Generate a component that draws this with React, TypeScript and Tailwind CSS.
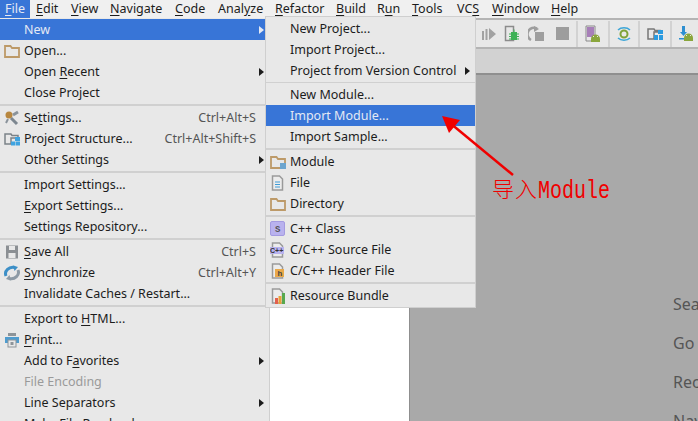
import { ReactNode } from "react";

const sans = "[font-family:'Noto_Sans','Liberation_Sans',sans-serif]";

function U({ children }: { children: ReactNode }) {
  return <span className="underline underline-offset-2">{children}</span>;
}

function Folder({ extra }: { extra?: boolean }) {
  return (
    <svg width="16" height="16" viewBox="0 0 16 16">
      <path d="M1 3h5.500l1.500 2h7v9H1z" fill="#e8e8e8" stroke="#bd9a68" strokeWidth="1.800" />
      {extra && <rect x="10" y="9" width="6" height="6" fill="#6ea6cf" />}
    </svg>
  );
}

function Doc({ children }: { children?: ReactNode }) {
  return (
    <svg width="16" height="16" viewBox="0 0 16 16">
      <path d="M2.500 1h7l3 3v11h-10z" fill="#ececec" stroke="#9a9a9a" strokeWidth="1.500" />
      {children}
    </svg>
  );
}

function Android({ x, y }: { x: number; y: number }) {
  return (
    <g transform={`translate(${x} ${y})`}>
      <path d="M0 6a4.500 4.500 0 0 1 9 0z" fill="#8aa63c" />
      <rect x="0" y="6" width="9" height="3" fill="#8aa63c" />
      <rect x="2" y="3" width="1" height="1" fill="#e8e8e8" />
      <rect x="6" y="3" width="1" height="1" fill="#e8e8e8" />
    </g>
  );
}

const icons: Record<string, ReactNode> = {
  folder: <Folder />,
  module: <Folder extra />,
  file: (
    <Doc>
      <path d="M5 7h5M5 9.500h5M5 12h5" stroke="#3f9bd6" strokeWidth="1" />
    </Doc>
  ),
  settings: (
    <svg width="16" height="16" viewBox="0 0 16 16">
      <circle cx="5" cy="5" r="3.500" fill="#b8873f" />
      <path d="M7 8l6 6" stroke="#7d8790" strokeWidth="3" />
      <path d="M9 5l5-3" stroke="#8a939b" strokeWidth="3" />
      <path d="M4 9l-2 4" stroke="#8a939b" strokeWidth="2" />
    </svg>
  ),
  structure: (
    <svg width="17" height="16" viewBox="0 0 17 16">
      <path d="M1 3h6l1 1.500h6V7H7v6H1z" fill="none" stroke="#7b8288" strokeWidth="1.500" />
      <rect x="11" y="6" width="5" height="4" fill="#3fa3e0" />
      <rect x="7" y="10.500" width="4" height="4" fill="#3fa3e0" />
      <rect x="11.500" y="10.500" width="4.500" height="4" fill="#3fa3e0" />
    </svg>
  ),
  save: (
    <svg width="16" height="16" viewBox="0 0 16 16">
      <path d="M2 1.500h12v13H2z" fill="#8b8f93" />
      <rect x="5" y="2" width="6" height="4" fill="#e8e8e8" />
      <rect x="4.500" y="9" width="7" height="5" fill="#e8e8e8" />
    </svg>
  ),
  sync: (
    <svg width="16" height="16" viewBox="0 0 16 16" fill="none">
      <path d="M2 11C0 6 5 1 11 2.500" stroke="#3c8fc7" strokeWidth="3" />
      <path d="M9 .5l5 1.500-3.500 4z" fill="#3c8fc7" />
      <path d="M14 5c2 5-3 10-9 8.500" stroke="#8d9aa5" strokeWidth="3" />
      <path d="M7 15.500L2 14l3.500-4z" fill="#8d9aa5" />
    </svg>
  ),
  print: (
    <svg width="16" height="16" viewBox="0 0 16 16">
      <rect x="4" y="1" width="8" height="3" fill="#8d9499" />
      <rect x="1" y="5" width="14" height="6" fill="#4e9ccf" />
      <rect x="4" y="8" width="8" height="7" fill="#e8e8e8" stroke="#8d9499" />
      <rect x="6.500" y="10" width="3" height="3" fill="#8d9499" />
    </svg>
  ),
  cppClass: (
    <svg width="15" height="15" viewBox="0 0 15 15">
      <rect x=".5" y=".5" width="14" height="14" rx="1.500" fill="#b9b2ee" stroke="#a49be0" />
      <text x="5" y="11" fontSize="9" fontFamily="Liberation Mono" fontWeight="700" fill="#555">S</text>
    </svg>
  ),
  cppSource: (
    <Doc>
      <rect x="0" y="5" width="14" height="7" fill="#b9b2ee" />
      <text x="0" y="11" fontSize="7" fontFamily="Liberation Sans" fontWeight="700" fill="#333">C++</text>
    </Doc>
  ),
  cppHeader: (
    <Doc>
      <rect x="5" y="6" width="9" height="8" fill="#e9a94a" />
      <text x="7.500" y="13" fontSize="8" fontFamily="Liberation Mono" fontWeight="700" fill="#444">h</text>
    </Doc>
  ),
  bundle: (
    <Doc>
      <rect x="5" y="10" width="3" height="6" fill="#e2604d" />
      <rect x="8.500" y="8" width="3" height="8" fill="#e9a23b" />
      <rect x="12" y="5" width="3" height="11" fill="#58a84f" />
    </Doc>
  ),
};

function Item({
  icon,
  label,
  shortcut,
  arrow,
  active,
  disabled,
}: {
  icon?: string;
  label: ReactNode;
  shortcut?: string;
  arrow?: boolean;
  active?: boolean;
  disabled?: boolean;
}) {
  return (
    <div
      className={`flex h-[21px] items-center pl-[4px] pr-[5px] ${
        active ? "bg-[#3875d7] text-[#e4e9f4]" : disabled ? "text-[#9a9a9a]" : "text-[#1c1c1c]"
      }`}
    >
      <span className="flex w-[20px] shrink-0 items-center justify-start">{icon && icons[icon]}</span>
      <span className="whitespace-nowrap pt-[2px]">{label}</span>
      <span className="flex-1" />
      {shortcut && <span className="mr-[8px] whitespace-nowrap pt-[2px] text-[#555]">{shortcut}</span>}
      {arrow && <span className="h-0 w-0 border-y-[4px] border-l-[5px] border-y-transparent border-l-current" />}
    </div>
  );
}

function Sep({ thin }: { thin?: boolean }) {
  return <div className={`${thin ? "my-px h-px" : "my-px h-[2px]"} bg-[#d0d0d0]`} />;
}

function ToolSep() {
  return <div className="h-[26px] w-[2px] bg-[#d2d2d2]" />;
}

function Toolbar() {
  return (
    <div className="flex h-[31px] items-center justify-end gap-[7px] border-y-2 border-[#b4b4b4] bg-[#e8e8e8] pr-[4px]">
      <svg width="16" height="16" viewBox="0 0 16 16">
        <path d="M1 5h2v9H1zM4.500 3h2v11h-2zM8 2l7 6-7 6z" fill="#a2a2a2" />
      </svg>
      <svg width="17" height="17" viewBox="0 0 17 17">
        <path d="M1.500 1.500h8v14h-8z" fill="none" stroke="#8c8c8c" strokeWidth="1.500" />
        <path d="M7 7h6v8H7z" fill="#3fb257" />
        <path d="M5 9h10M5 11.500h10M5 14h10M10 4.500v3" stroke="#3fb257" />
      </svg>
      <svg width="16" height="16" viewBox="0 0 16 16" className="mr-[5px]" fill="none">
        <path d="M9 2.500A6 6 0 0 0 3 14" stroke="#9e9e9e" strokeWidth="2.500" />
        <path d="M6 0l5 3-5 3z" fill="#9e9e9e" />
        <rect x="7" y="6" width="9" height="9" fill="#9e9e9e" />
      </svg>
      <span className="h-[13px] w-[13px] bg-[#9d9d9d]" />
      <ToolSep />
      <svg width="16" height="17" viewBox="0 0 16 17">
        <path d="M1 1h9v15H1z" fill="none" stroke="#8a8a8a" strokeWidth="1" />
        <rect x="2" y="2" width="7" height="10" fill="#a77fb8" />
        <Android x={6} y={8} />
      </svg>
      <ToolSep />
      <svg width="14" height="16" viewBox="0 0 14 16" fill="none">
        <circle cx="7" cy="8" r="3.500" stroke="#7fa33a" strokeWidth="2" />
        <path d="M1 4c3-3 9-3 12 0M13 12c-3 3-9 3-12 0" stroke="#3ea6d8" strokeWidth="1.500" />
      </svg>
      <ToolSep />
      <svg width="16" height="14" viewBox="0 0 16 14">
        <path d="M1 2h6l1 1.500h5V5H7v7H1z" fill="none" stroke="#777" strokeWidth="1.500" />
        <rect x="11" y="3" width="5" height="4" fill="#2a9be0" />
        <rect x="7" y="8" width="4" height="5" fill="#2a9be0" />
        <rect x="12" y="8" width="4" height="5" fill="#2a9be0" />
      </svg>
      <ToolSep />
      <svg width="15" height="16" viewBox="0 0 15 16">
        <path d="M3 0h3v6h2L4.500 10 1 6h2z" fill="#2d8fd0" />
        <rect x="0" y="12" width="6" height="1.500" fill="#2d8fd0" />
        <Android x={5} y={6} />
      </svg>
    </div>
  );
}

export default function App() {
  return (
    <div className={`relative flex h-[421px] w-[698px] flex-col overflow-hidden bg-white text-[12.5px] leading-none ${sans}`}>
      {/* menu bar */}
      <div className="flex h-[18px] items-center bg-[#f0f0f0] pr-2 text-[#1c1c1c]">
        <span className="flex h-[18px] w-[30px] items-center justify-center bg-[#3875d7] text-[#e4e9f4]"><U>F</U>ile</span>
        <span className="ml-[6px] w-[35px]"><U>E</U>dit</span>
        <span className="w-[39px]"><U>V</U>iew</span>
        <span className="w-[65px]"><U>N</U>avigate</span>
        <span className="w-[43px]"><U>C</U>ode</span>
        <span className="w-[57px]">Anal<U>y</U>ze</span>
        <span className="w-[61px]"><U>R</U>efactor</span>
        <span className="w-[41px]"><U>B</U>uild</span>
        <span className="w-[35px]">R<U>u</U>n</span>
        <span className="w-[45px]"><U>T</U>ools</span>
        <span className="w-[35px]">VC<U>S</U></span>
        <span className="w-[59px]"><U>W</U>indow</span>
        <span><U>H</U>elp</span>
      </div>

      <Toolbar />

      {/* tab strip */}
      <div className="h-[26px] shrink-0 border-b-2 border-[#8f8f8f] bg-[#d2d2d2]" />

      {/* editor area */}
      <div className="flex min-h-0 flex-1">
        <div className="w-[409px] shrink-0 bg-white" />
        <div className="min-w-0 flex-1 overflow-hidden border-l border-[#8f8f8f] bg-[#a9a9a9] pl-[263px] pt-[221px] text-[16px] text-[#555]">
          <div className="h-[39px] whitespace-nowrap">Sea</div>
          <div className="h-[39px] whitespace-nowrap">Go</div>
          <div className="h-[39px] whitespace-nowrap">Rec</div>
          <div className="h-[39px] whitespace-nowrap">Nav</div>
        </div>
      </div>

      {/* File menu */}
      <div className="absolute left-0 top-[18px] w-[270px] border-r border-[#cfcfcf] bg-[#e8e8e8] pt-px">
        <Item label="New" arrow active />
        <Item icon="folder" label="Open..." />
        <Item label={<>Open <U>R</U>ecent</>} arrow />
        <Item label="Close Project" />
        <Sep />
        <Item icon="settings" label={<>Se<U>t</U>tings...</>} shortcut="Ctrl+Alt+S" />
        <Item icon="structure" label="Project Structure..." shortcut="Ctrl+Alt+Shift+S" />
        <Item label="Other Settings" arrow />
        <Sep />
        <Item label="Import Settings..." />
        <Item label={<><U>E</U>xport Settings...</>} />
        <Item label="Settings Repository..." />
        <Sep />
        <Item icon="save" label={<><U>S</U>ave All</>} shortcut="Ctrl+S" />
        <Item icon="sync" label={<><U>S</U>ynchronize</>} shortcut="Ctrl+Alt+Y" />
        <Item label="Invalidate Caches / Restart..." />
        <Sep />
        <Item label={<>Export to <U>H</U>TML...</>} />
        <Item icon="print" label={<><U>P</U>rint...</>} />
        <Item label={<>Add to F<U>a</U>vorites</>} arrow />
        <Item label="File Encoding" disabled />
        <Item label="Line Separators" arrow />
        <Item label={<>Make File Read-only</>} />
      </div>

      {/* New submenu */}
      <div className="absolute left-[265px] top-[16px] w-[211px] border border-[#cfcfcf] bg-[#e8e8e8] pb-px pt-[1px]">
        <Item label="New Project..." />
        <Item label="Import Project..." />
        <Item label="Project from Version Control" arrow />
        <Sep thin />
        <Item label="New Module..." />
        <Item label="Import Module..." active />
        <Item label="Import Sample..." />
        <Sep />
        <Item icon="module" label="Module" />
        <Item icon="file" label="File" />
        <Item icon="folder" label="Directory" />
        <Sep />
        <Item icon="cppClass" label="C++ Class" />
        <Item icon="cppSource" label="C/C++ Source File" />
        <Item icon="cppHeader" label="C/C++ Header File" />
        <Sep />
        <Item icon="bundle" label="Resource Bundle" />
      </div>

      {/* red annotation */}
      <svg className="absolute left-[436px] top-[110px]" width="84" height="72" viewBox="0 0 84 72">
        <path d="M77 65L14 13" stroke="#f00000" strokeWidth="2.500" />
        <path d="M6 6l18 4-11 13z" fill="#f00000" />
      </svg>
      <div className="absolute left-[492px] top-[180px] flex items-center whitespace-nowrap text-[20px] leading-[24px] text-[#f00000] [font-family:'Liberation_Mono','Noto_Sans_CJK_SC',monospace]">
        <span className="w-[46px] text-[22px] font-light tracking-[1px]">导入</span>
        <span className="inline-block scale-y-[1.28]">Module</span>
      </div>
    </div>
  );
}
